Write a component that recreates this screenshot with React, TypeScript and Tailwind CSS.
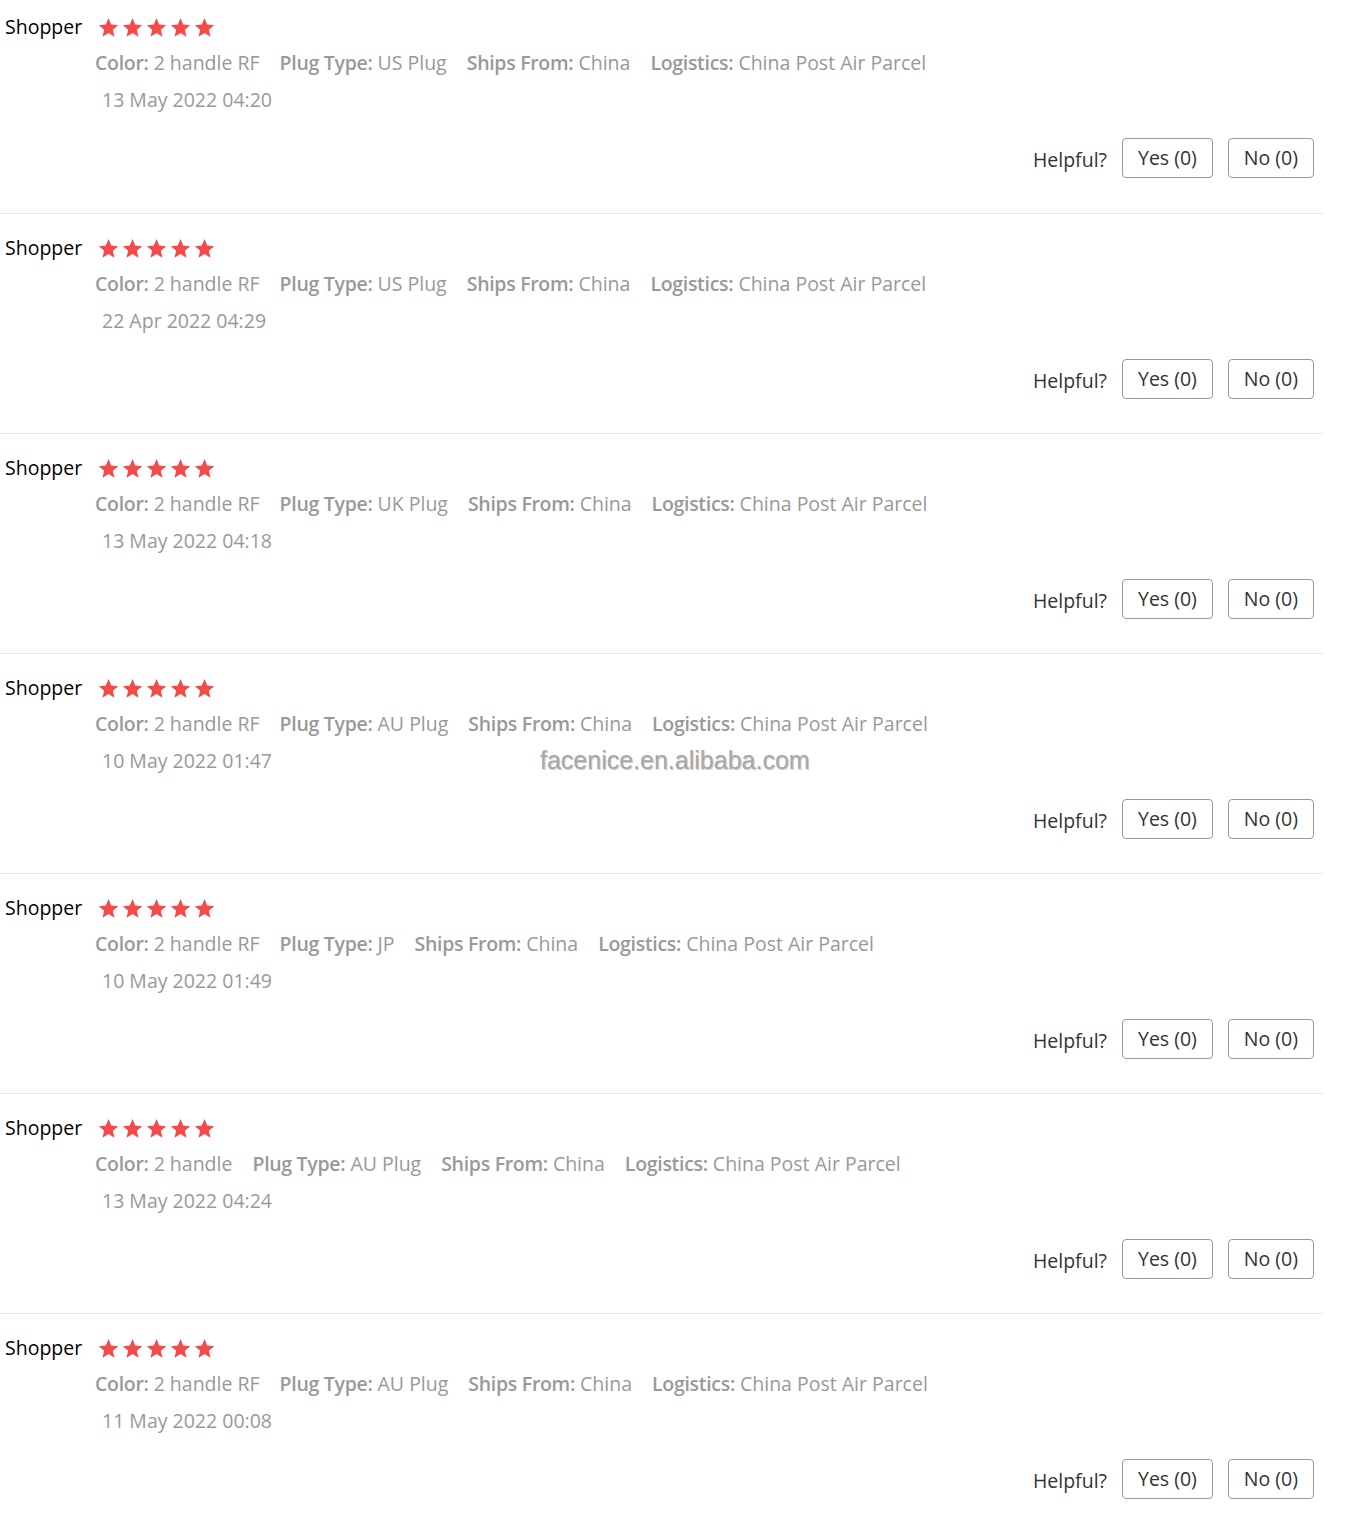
import React from 'react';

interface Review {
  color: string;
  plug: string;
  date: string;
  watermark?: boolean;
}

const reviews: Review[] = [
  { color: '2 handle RF', plug: 'US Plug', date: '13 May 2022 04:20' },
  { color: '2 handle RF', plug: 'US Plug', date: '22 Apr 2022 04:29' },
  { color: '2 handle RF', plug: 'UK Plug', date: '13 May 2022 04:18' },
  { color: '2 handle RF', plug: 'AU Plug', date: '10 May 2022 01:47', watermark: true },
  { color: '2 handle RF', plug: 'JP', date: '10 May 2022 01:49' },
  { color: '2 handle', plug: 'AU Plug', date: '13 May 2022 04:24' },
  { color: '2 handle RF', plug: 'AU Plug', date: '11 May 2022 00:08' },
];

const Star = () => (
  <svg width="21" height="21" viewBox="0 0 24 24" className="mr-[3px]">
    <path
      d="M12 1.2l3.1 7.4 8 .7-6.1 5.3 1.85 7.9L12 18.3l-6.85 4.2L7 14.6.9 9.3l8-.7z"
      fill="#f44a4a"
    />
  </svg>
);

const Attr = ({ label, value }: { label: string; value: string }) => (
  <span className="mr-5 whitespace-nowrap">
    <span className="font-semibold text-[#999] tracking-[-0.3px]">{label}:</span>{' '}
    <span className="text-[#999]">{value}</span>
  </span>
);

const ReviewItem = ({ review, first }: { review: Review; first: boolean }) => (
  <div className={`border-b border-[#e8e8e8] ${first ? 'h-[214px] pt-[13px]' : 'h-[220px] pt-[20px]'}`}>
    <div className="flex items-center h-7 pl-[5px]">
      <span className="text-black text-[19.5px] leading-7 mr-[16px]">Shopper</span>
      <div className="flex items-center">
        <Star />
        <Star />
        <Star />
        <Star />
        <Star />
      </div>
    </div>
    <div className="mt-2 pl-[95px] h-7 leading-7 text-[19.5px] flex">
      <Attr label="Color" value={review.color} />
      <Attr label="Plug Type" value={review.plug} />
      <Attr label="Ships From" value="China" />
      <Attr label="Logistics" value="China Post Air Parcel" />
    </div>
    <div className="relative mt-[9px] pl-[102px] h-7 leading-7 text-[19.5px] text-[#999]">
      {review.date}
      {review.watermark && (
        <span
          className="absolute left-[540px] top-[-1px] text-[25px] text-[#a8a8a8] [text-shadow:1px_1px_1px_rgba(0,0,0,0.22)]"
          style={{ fontFamily: '"Liberation Sans", Arial, sans-serif' }}
        >
          facenice.en.alibaba.com
        </span>
      )}
    </div>
    <div className="mt-6 flex items-center justify-end pr-[9px]">
      <span className="text-[19.5px] text-[#333] mr-[15px] mt-1">Helpful?</span>
      <button className="h-10 px-[15px] border border-[#999] rounded-[4px] text-[19.5px] text-[#333] bg-white mr-[15px]">
        Yes (0)
      </button>
      <button className="h-10 px-[15px] border border-[#999] rounded-[4px] text-[19.5px] text-[#333] bg-white">
        No (0)
      </button>
    </div>
  </div>
);

export default function App() {
  return (
    <div
      className="w-[1350px] h-[1516px] bg-white overflow-hidden"
      style={{ fontFamily: '"Open Sans", "Noto Sans", sans-serif' }}
    >
      <div className="w-[1323px]">
        {reviews.map((r, i) => (
          <ReviewItem key={i} review={r} first={i === 0} />
        ))}
      </div>
    </div>
  );
}
